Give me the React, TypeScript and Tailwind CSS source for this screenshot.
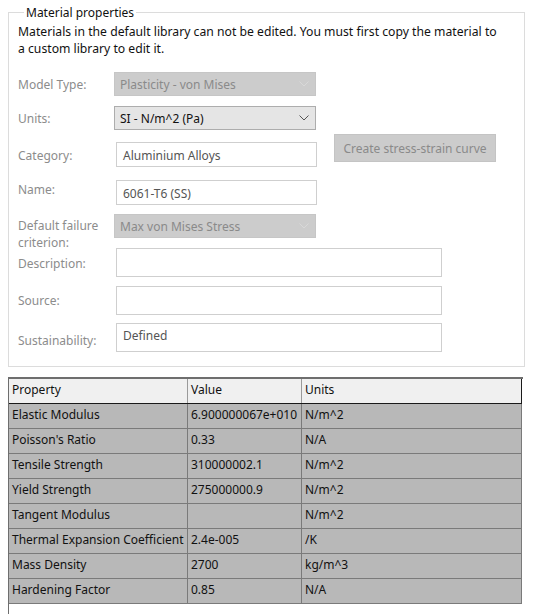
import React from 'react';

const font = { fontFamily: '"Noto Sans", "Open Sans", Arial, sans-serif' };

function Chevron({ light }: { light?: boolean }) {
  return (
    <svg width="10" height="6" viewBox="0 0 10 6" className="shrink-0">
      <path d="M0.5 0.5 L5 5 L9.5 0.5" fill="none" stroke={light ? '#d8d8d8' : '#555'} strokeWidth="1" />
    </svg>
  );
}

function Select({ value, disabled }: { value: string; disabled?: boolean }) {
  return (
    <div
      className={`flex h-[24px] w-[202px] items-center justify-between border pl-[5px] pr-[6px] ${
        disabled ? 'border-[#c6c6c6] bg-[#cccccc] text-[#8a8a8a]' : 'border-[#adadad] bg-[#e5e5e5] text-[#111]'
      }`}
    >
      <span>{value}</span>
      <Chevron light={disabled} />
    </div>
  );
}

function Field({ value, wide, h = 25, top = 4 }: { value?: string; wide?: boolean; h?: number; top?: number }) {
  return (
    <div
      className={`border border-[#cfcfcf] bg-white pl-[6px] text-[#555] ${wide ? 'w-[326px]' : 'w-[201px]'}`}
      style={{ height: h, paddingTop: top }}
    >
      {value}
    </div>
  );
}

const rows = [
  ['Elastic Modulus', '6.900000067e+010', 'N/m^2'],
  ["Poisson's Ratio", '0.33', 'N/A'],
  ['Tensile Strength', '310000002.1', 'N/m^2'],
  ['Yield Strength', '275000000.9', 'N/m^2'],
  ['Tangent Modulus', '', 'N/m^2'],
  ['Thermal Expansion Coefficient', '2.4e-005', '/K'],
  ['Mass Density', '2700', 'kg/m^3'],
  ['Hardening Factor', '0.85', 'N/A'],
];

export default function App() {
  return (
    <div className="h-[614px] w-[533px] overflow-hidden bg-white text-[12px] leading-[17px]" style={font}>
      <fieldset className="mx-[8px] mt-[4px] h-[363px] border border-[#dcdcdc] pl-[9px] pr-[8px]">
        <legend className="ml-[6px] px-[2px] text-[12px] text-[#111]">Material properties</legend>
        <p className="mt-[2px] h-[49px] w-[486px] text-[12.2px] text-[#111]">
          Materials in the default library can not be edited. You must first copy the material to a custom library to
          edit it.
        </p>

        <div className="flex h-[34px] text-[#8c8c8c]">
          <div className="w-[96px] pt-[4px]">Model Type:</div>
          <Select value="Plasticity - von Mises" disabled />
        </div>
        <div className="flex h-[28px] text-[#8c8c8c]">
          <div className="w-[96px] pt-[4px]">Units:</div>
          <Select value="SI - N/m^2 (Pa)" />
        </div>
        <div className="flex h-[46px] items-start text-[#8c8c8c]">
          <div className="w-[98px] pt-[13px]">Category:</div>
          <div className="mt-[8px]">
            <Field value="Aluminium Alloys" />
          </div>
          <button className="ml-[17px] h-[28px] w-[162px] border border-[#c4c4c4] bg-[#cccccc] text-[#8a8a8a]">
            Create stress-strain curve
          </button>
        </div>
        <div className="flex h-[34px] text-[#8c8c8c]">
          <div className="w-[98px] pt-[1px]">Name:</div>
          <Field value="6061-T6 (SS)" />
        </div>
        <div className="flex h-[34px] text-[#8c8c8c]">
          <div className="w-[96px] pt-[3px]">
            Default failure
            <br />
            criterion:
          </div>
          <Select value="Max von Mises Stress" disabled />
        </div>
        <div className="flex h-[38px] text-[#8c8c8c]">
          <div className="w-[98px] pt-[7px]">Description:</div>
          <Field wide h={29} />
        </div>
        <div className="flex h-[37px] text-[#8c8c8c]">
          <div className="w-[98px] pt-[6px]">Source:</div>
          <Field wide h={29} />
        </div>
        <div className="flex h-[30px] text-[#8c8c8c]">
          <div className="w-[98px] pt-[9px]">Sustainability:</div>
          <Field wide h={29} value="Defined" top={3} />
        </div>
      </fieldset>

      {/* properties table */}
      <div className="ml-[8px] mt-[10px] h-[300px] w-[515px] border-l border-t-2 border-[#6e6e6e] text-[12px] text-[#111]">
        <div className="flex h-[25px] w-[513px] items-center border-b border-r border-[#1a1a1a] bg-[#f0f0f0]">
          <div className="h-full w-[179px] border-r border-[#9a9a9a] pl-[3px] leading-[22px]">Property</div>
          <div className="h-full w-[114px] border-r border-[#9a9a9a] pl-[3px] leading-[22px]">Value</div>
          <div className="h-full flex-1 pl-[3px] leading-[22px]">Units</div>
        </div>
        {rows.map(([p, v, u]) => (
          <div key={p} className="flex h-[25px] w-[513px] border-b border-r border-[#7a7a7a] bg-[#b8b8b8]">
            <div className="h-full w-[179px] border-r border-[#7a7a7a] pl-[3px] leading-[22px]">{p}</div>
            <div className="h-full w-[114px] border-r border-[#7a7a7a] pl-[3px] leading-[22px]">{v}</div>
            <div className="h-full flex-1 pl-[3px] leading-[22px]">{u}</div>
          </div>
        ))}
      </div>
    </div>
  );
}
